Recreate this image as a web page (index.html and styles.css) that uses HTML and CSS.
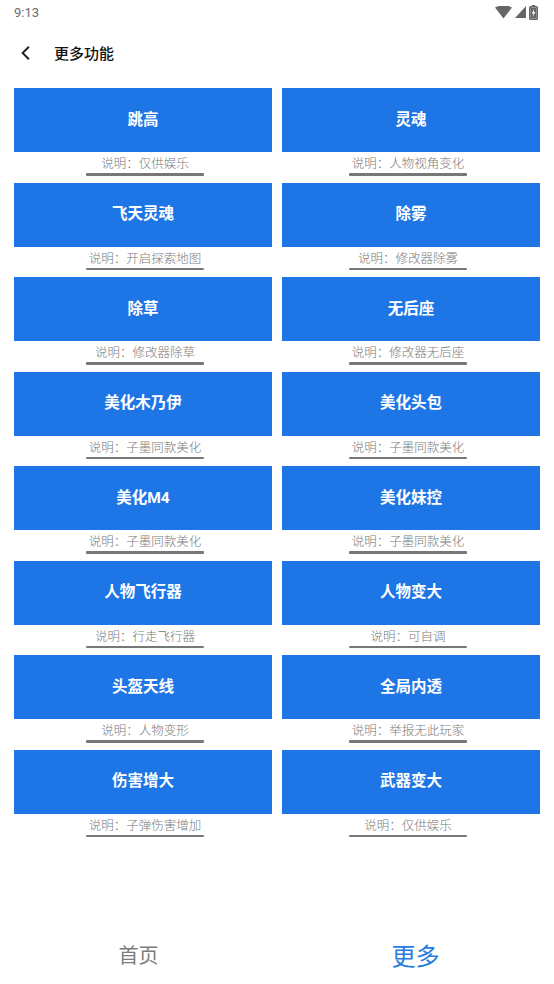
FILE: index.html
```html
<!DOCTYPE html>
<html>

<head>
    <title>更多功能</title>
    <meta charset="utf-8">
    <meta name="viewport" content="width=device-width, initial-scale=1.0">
    <link rel="stylesheet" href="styles.css">
</head>

<body>
    <div class="side">
        <header class="statusbar">
            <span class="tid">9:13</span>
            <span class="ikoner">
                <svg width="17" height="13" viewBox="0 0 17 13"><path d="M0 1.5 Q8.5 -3 17 1.5 L8.5 12.5 Z" fill="#666"/></svg>
                <svg width="11" height="12" viewBox="0 0 11 12"><path d="M11 0 V12 H0 Z" fill="#666"/></svg>
                <svg width="9" height="15" viewBox="0 0 9 15"><rect x="2.8" y="0" width="3.4" height="2" fill="#666"/><rect x="0.8" y="1.8" width="7.4" height="12.4" rx="0.8" fill="none" stroke="#666" stroke-width="1.6"/><rect x="1.6" y="2.6" width="5.8" height="10.8" fill="#666"/><path d="M5.2 3.8 L2.8 8.6 H4.4 L3.8 12 L6.4 7 H4.8 Z" fill="#fff"/></svg>
            </span>
        </header>

        <nav class="topbar">
            <button class="tilbage">
                <svg width="24" height="24" viewBox="0 0 24 24"><path d="M15.6 6.4 L14.2 5 L7.2 12 L14.2 19 L15.6 17.6 L10 12 Z" fill="#222"/></svg>
            </button>
            <h1>更多功能</h1>
        </nav>

        <section id="liste">
            <div class="felt"><button class="knap">跳高</button><div class="note"><p>说明：仅供娱乐</p></div></div>
            <div class="felt"><button class="knap">灵魂</button><div class="note"><p>说明：人物视角变化</p></div></div>
            <div class="felt"><button class="knap">飞天灵魂</button><div class="note"><p>说明：开启探索地图</p></div></div>
            <div class="felt"><button class="knap">除雾</button><div class="note"><p>说明：修改器除雾</p></div></div>
            <div class="felt"><button class="knap">除草</button><div class="note"><p>说明：修改器除草</p></div></div>
            <div class="felt"><button class="knap">无后座</button><div class="note"><p>说明：修改器无后座</p></div></div>
            <div class="felt"><button class="knap">美化木乃伊</button><div class="note"><p>说明：子墨同款美化</p></div></div>
            <div class="felt"><button class="knap">美化头包</button><div class="note"><p>说明：子墨同款美化</p></div></div>
            <div class="felt"><button class="knap">美化M4</button><div class="note"><p>说明：子墨同款美化</p></div></div>
            <div class="felt"><button class="knap">美化妹控</button><div class="note"><p>说明：子墨同款美化</p></div></div>
            <div class="felt"><button class="knap">人物飞行器</button><div class="note"><p>说明：行走飞行器</p></div></div>
            <div class="felt"><button class="knap">人物变大</button><div class="note"><p>说明：可自调</p></div></div>
            <div class="felt"><button class="knap">头盔天线</button><div class="note"><p>说明：人物变形</p></div></div>
            <div class="felt"><button class="knap">全局内透</button><div class="note"><p>说明：举报无此玩家</p></div></div>
            <div class="felt"><button class="knap">伤害增大</button><div class="note"><p>说明：子弹伤害增加</p></div></div>
            <div class="felt"><button class="knap">武器变大</button><div class="note"><p>说明：仅供娱乐</p></div></div>
        </section>

        <footer class="bundmenu">
            <button>首页</button>
            <button class="valgt">更多</button>
        </footer>
    </div>
</body>

</html>
```

FILE: styles.css
```css
body {
    margin: 0;
    background: white;
    font-family: Roboto, "Noto Sans CJK SC", sans-serif;
}

.side {
    display: flex;
    flex-direction: column;
    height: 984px;
}

.statusbar {
    height: 24px;
    display: flex;
    align-items: center;
    justify-content: space-between;
    padding: 0 16px 0 14px;
    color: #6b6b6b;
    font-size: 13px;
}

.ikoner {
    display: flex;
    align-items: center;
    gap: 3px;
}

.ikoner svg {
    display: block;
}

.topbar {
    height: 56px;
    display: flex;
    align-items: center;
}

.tilbage {
    border: 0;
    background: none;
    padding: 0;
    margin: 2px 16px 0 14px;
    width: 24px;
    height: 24px;
}

.tilbage svg {
    display: block;
}

.topbar h1 {
    margin: 0;
    font-size: 15px;
    font-weight: 500;
    color: #111;
}

#liste {
    flex: 1;
    display: grid;
    grid-template-columns: 1fr 1fr;
    column-gap: 10px;
    padding: 8px 14px 0;
    align-content: start;
}

.knap {
    display: block;
    width: 100%;
    height: 64px;
    padding: 0 0 5px;
    border: 0;
    background: #1e76e6;
    color: white;
    font-family: Roboto, "Noto Sans CJK SC", sans-serif;
    font-size: 15.5px;
    font-weight: bold;
}

.note {
    width: 118px;
    margin: 0 auto 7px;
    padding-top: 3px;
}

.felt:nth-child(odd) .note {
    position: relative;
    left: 2px;
}

.felt:nth-child(even) .note {
    position: relative;
    left: -3px;
}

.note p {
    margin: 0;
    height: 17px;
    line-height: 17px;
    text-align: center;
    white-space: nowrap;
    font-size: 12.5px;
    font-weight: 300;
    color: #7a7a7a;
}

.note::after {
    content: "";
    display: block;
    margin-top: 1px;
    height: 2.5px;
    border-radius: 1px;
    background: #777;
}

.bundmenu {
    height: 60px;
    display: flex;
    align-items: center;
    padding-top: 3px;
}

.bundmenu button {
    flex: 1;
    border: 0;
    background: none;
    font-family: Roboto, "Noto Sans CJK SC", sans-serif;
    font-size: 20px;
    color: #7d7d7d;
}

.bundmenu .valgt {
    font-size: 24px;
    color: #2a7be0;
}
```
